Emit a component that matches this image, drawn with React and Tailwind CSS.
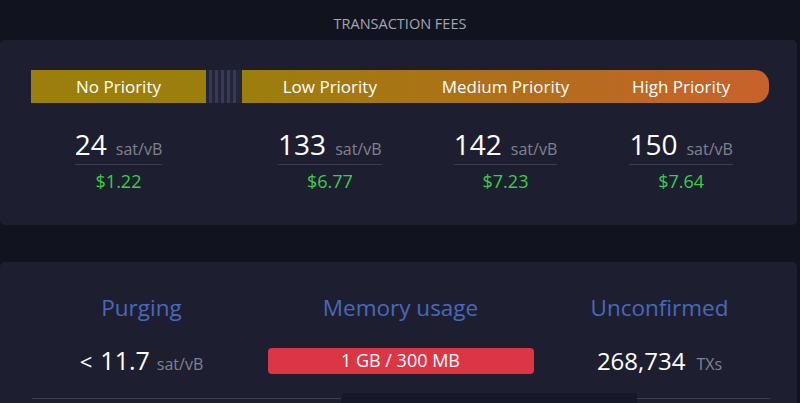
export default function App() {
  const font = { fontFamily: '"Open Sans", "Noto Sans", sans-serif' };
  const fees = [
    { v: "133", usd: "$6.77" },
    { v: "142", usd: "$7.23" },
    { v: "150", usd: "$7.64" },
  ];
  const Fee = ({ v, usd }) => (
    <div className="flex flex-col items-center">
      <div className="flex items-baseline border-b border-[#3b3e55] pb-[3px]">
        <span className="text-[28px] leading-[34px] text-white">{v}</span>
        <span className="ml-[9px] text-[16px] text-[#80828f]">sat/vB</span>
      </div>
      <div className="mt-[4px] text-[18px] leading-[24px] text-[#3bcc49]">{usd}</div>
    </div>
  );
  return (
    <div className="relative h-[403px] w-[800px] overflow-hidden bg-[#11131f]" style={font}>
      <div className="flex h-[40px] items-start justify-center pt-[14px] text-[14.5px] leading-[20px] text-[#a3a5b1]">
        TRANSACTION FEES
      </div>
      <div className="h-[185px] w-[797px] rounded-[5px] bg-[#1d1f31] pl-[31px] pr-[28px] pt-[30px]">
        <div className="flex h-[33px] text-[17px] text-white">
          <div className="flex w-[175px] items-center justify-center bg-[#9b7e0c]">No Priority</div>
          <div className="flex w-[36px] gap-[3px] bg-[#23263a] pl-[3px]">
            <div className="w-[3px] bg-[#363a55]" />
            <div className="w-[3px] bg-[#363a55]" />
            <div className="w-[3px] bg-[#363a55]" />
            <div className="w-[3px] bg-[#363a55]" />
            <div className="w-[3px] bg-[#363a55]" />
          </div>
          <div className="grid flex-1 grid-cols-3 items-center rounded-r-[14px] bg-gradient-to-r from-[#9b7e0c] via-[#b06f19] to-[#c8612c] text-center">
            <div>Low Priority</div>
            <div>Medium Priority</div>
            <div>High Priority</div>
          </div>
        </div>
        <div className="mt-[24px] flex">
          <div className="w-[175px]">
            <Fee v="24" usd="$1.22" />
          </div>
          <div className="w-[36px]" />
          <div className="grid flex-1 grid-cols-3">
            {fees.map((f) => (
              <Fee key={f.v} v={f.v} usd={f.usd} />
            ))}
          </div>
        </div>
      </div>
      <div className="mt-[37px] h-[200px] w-[797px] rounded-[5px] bg-[#1d1f31] pl-[12px] pr-[8px] pt-[31px]">
        <div className="grid grid-cols-3 text-center">
          <div className="text-[22.5px] leading-[30px] text-[#4a68b9]">Purging</div>
          <div className="text-[22.5px] leading-[30px] text-[#4a68b9]">Memory usage</div>
          <div className="text-[22.5px] leading-[30px] text-[#4a68b9]">Unconfirmed</div>
        </div>
        <div className="mt-[19px] grid h-[30px] grid-cols-3 items-center">
          <div className="flex items-baseline justify-center text-white">
            <span className="text-[22px]">&lt;</span>
            <span className="ml-[8px] text-[25px]">11.7</span>
            <span className="ml-[7px] text-[16px] text-[#80828f]">sat/vB</span>
          </div>
          <div className="flex justify-center">
            <div className="flex h-[26px] w-[266px] shrink-0 items-center justify-center rounded-[4px] bg-[#dc3545] text-[18px] text-white">
              1 GB / 300 MB
            </div>
          </div>
          <div className="flex items-baseline justify-center text-white">
            <span className="text-[24px]">268,734</span>
            <span className="ml-[11px] text-[16px] text-[#80828f]">TXs</span>
          </div>
        </div>
        <div className="ml-[20px] mt-[26px] h-px w-[738px] bg-[#3b3e55]" />
      </div>
      <div className="absolute left-[341px] top-[393px] h-[20px] w-[296px] rounded-tl-[6px] bg-[#15172a]" />
    </div>
  );
}
